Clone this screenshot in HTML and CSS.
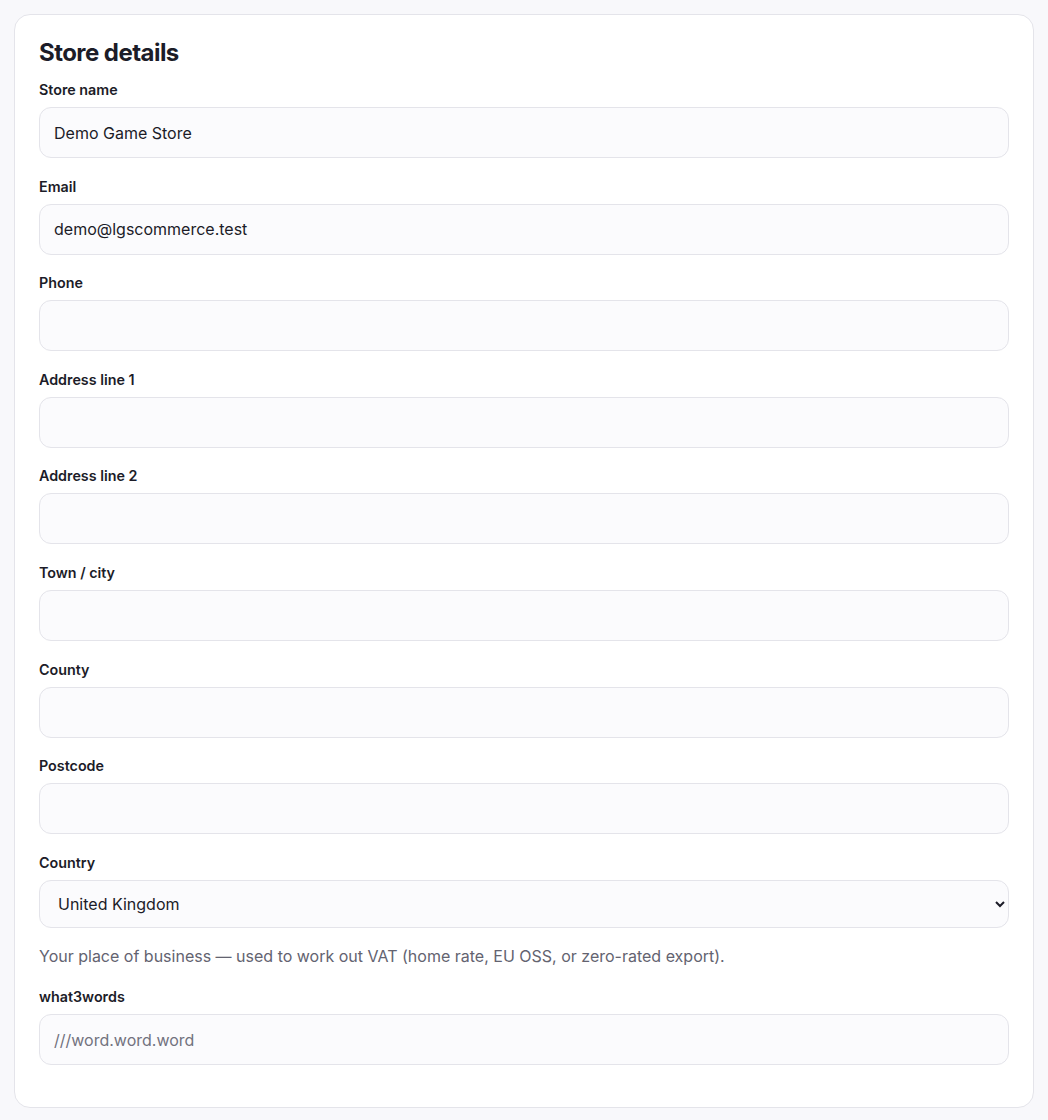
FILE: index.html
```html
<!DOCTYPE html>
<html lang="en">
<head>
<meta charset="utf-8">
<title>Store details</title>
<link rel="stylesheet" href="styles.css">
</head>
<body>
<main class="page">
  <section class="card">
    <h2 class="card-title">Store details</h2>
    <div class="field">
      <label class="label" for="name">Store name</label>
      <input class="input" id="name" type="text" value="Demo Game Store">
    </div>
    <div class="field">
      <label class="label" for="email">Email</label>
      <input class="input" id="email" type="email" value="demo@lgscommerce.test">
    </div>
    <div class="field">
      <label class="label" for="phone">Phone</label>
      <input class="input" id="phone" type="text">
    </div>
    <div class="field">
      <label class="label" for="a1">Address line 1</label>
      <input class="input" id="a1" type="text">
    </div>
    <div class="field">
      <label class="label" for="a2">Address line 2</label>
      <input class="input" id="a2" type="text">
    </div>
    <div class="field">
      <label class="label" for="town">Town / city</label>
      <input class="input" id="town" type="text">
    </div>
    <div class="field">
      <label class="label" for="county">County</label>
      <input class="input" id="county" type="text">
    </div>
    <div class="field">
      <label class="label" for="pc">Postcode</label>
      <input class="input" id="pc" type="text">
    </div>
    <div class="field">
      <label class="label" for="country">Country</label>
      <select class="input select" id="country">
        <option selected>United Kingdom</option>
        <option>Ireland</option>
        <option>France</option>
      </select>
      <p class="help">Your place of business — used to work out VAT (home rate, EU OSS, or zero-rated export).</p>
    </div>
    <div class="field">
      <label class="label" for="w3w">what3words</label>
      <input class="input" id="w3w" type="text" placeholder="///word.word.word">
    </div>
  </section>
</main>
</body>
</html>
```
FILE: styles.css
```css
* { box-sizing: border-box; }
html, body { margin: 0; padding: 0; }
body {
  background: #f8f8fb;
  font-family: Inter, "Noto Sans", sans-serif;
  color: #1c1c28;
}
.page { padding: 14px; }
.card {
  background: #ffffff;
  border: 1px solid #e4e4ea;
  border-radius: 16px;
  padding: 24px 24px 23px;
}
.card-title {
  margin: 0 0 13px;
  font-size: 24px;
  line-height: 28px;
  font-weight: 700;
  letter-spacing: -0.55px;
  color: #1c1c28;
}
.field { margin-bottom: 18.6px; }
.label {
  display: block;
  font-size: 14.3px;
  line-height: 20px;
  font-weight: 600;
  color: #1c1c28;
  margin-bottom: 7px;
}
.input {
  display: block;
  width: 100%;
  height: 51px;
  padding: 0 14px;
  font-family: Inter, "Noto Sans", sans-serif;
  font-size: 16px;
  color: #1c1c28;
  background: #fbfbfd;
  border: 1px solid #e4e4ea;
  border-radius: 12px;
  outline: none;
}
.input::placeholder { color: #72727e; }
.select { height: 48px; padding: 0 14px; }
.help {
  margin: 16px 0 0;
  padding-bottom: 1px;
  font-size: 16px;
  line-height: 24px;
  color: #636370;
}
```
